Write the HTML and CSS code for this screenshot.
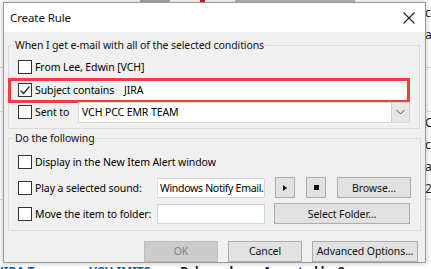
FILE: index.html
```html
<html>
<head>
  <title>Create Rule</title>
  <link rel="stylesheet" href="styles.css">
</head>
<body>

<div class="desktop">
  <!-- mail list behind the dialog -->
  <div class="mail-list">
    <div class="mail-row top"><span class="bit gray"></span><span class="bit red"></span><span class="bit gray wide"></span></div>
    <div class="mail-row"><span class="m-right">co</span></div>
    <div class="mail-row"><span class="m-right">ar</span></div>
    <div class="mail-row line"><span class="m-right">&nbsp;</span></div>
    <div class="mail-row"><span class="m-right">&nbsp;</span></div>
    <div class="mail-row line"><span class="m-right">&nbsp;</span></div>
    <div class="mail-row"><span class="m-right">Co</span></div>
    <div class="mail-row"><span class="m-right">co</span></div>
    <div class="mail-row"><span class="m-right">ar</span></div>
    <div class="mail-row line"><span class="m-right">2</span></div>
    <div class="mail-row"><span class="m-right">&nbsp;</span></div>
    <div class="mail-row bottom">
      <span class="blue">JIRA Team</span><span class="blue">VCH IMITS</span>
      <span class="dark">Released</span><span class="dark">Accepted by 2</span>
    </div>
  </div>

  <div class="dialog">
    <div class="titlebar">
      <span class="title">Create Rule</span>
      <svg class="close" width="12" height="12" viewBox="0 0 12 12">
        <path d="M0.5 0.5 L11.5 11.5 M11.5 0.5 L0.5 11.5" stroke="#222" stroke-width="1.1" fill="none"/>
      </svg>
    </div>

    <div class="dialog-body">
      <fieldset class="group group-when">
        <legend>When I get e-mail with all of the selected conditions</legend>

        <div class="row">
          <label class="check"><span class="box"></span>From Lee, Edwin [VCH]</label>
        </div>

        <div class="row highlighted">
          <label class="check w-subject"><span class="box checked">
            <svg width="12" height="12" viewBox="0 0 12 12"><path d="M1.5 6.5 L4.5 9.5 L10.5 2.5" stroke="#222" stroke-width="1.2" fill="none"/></svg>
          </span>Subject contains</label>
          <div class="field grow">JIRA</div>
          <div class="red-box"></div>
        </div>

        <div class="row">
          <label class="check w-sent"><span class="box"></span>Sent to</label>
          <div class="combo grow">
            <span class="combo-text">VCH PCC EMR TEAM</span>
            <span class="combo-btn">
              <svg width="9" height="6" viewBox="0 0 9 6"><path d="M0.5 1 L4.5 5 L8.5 1" stroke="#555" stroke-width="1" fill="none"/></svg>
            </span>
          </div>
        </div>
      </fieldset>

      <fieldset class="group group-do">
        <legend>Do the following</legend>

        <div class="row tall">
          <label class="check"><span class="box"></span>Display in the New Item Alert window</label>
        </div>

        <div class="row tall">
          <label class="check w-action"><span class="box"></span>Play a selected sound:</label>
          <div class="field sound">Windows Notify Email.</div>
          <button class="btn icon-btn play">
            <svg width="4" height="6" viewBox="0 0 4 6"><path d="M0 0 L4 3 L0 6 Z" fill="#111"/></svg>
          </button>
          <button class="btn icon-btn stop">
            <svg width="5" height="5" viewBox="0 0 5 5"><rect width="5" height="5" fill="#111"/></svg>
          </button>
          <button class="btn browse">Browse...</button>
        </div>

        <div class="row tall">
          <label class="check w-action"><span class="box"></span>Move the item to folder:</label>
          <div class="field folder"></div>
          <button class="btn select-folder">Select Folder...</button>
        </div>
      </fieldset>

      <div class="actions">
        <button class="btn action disabled">OK</button>
        <button class="btn action">Cancel</button>
        <button class="btn action wide">Advanced Options...</button>
      </div>
    </div>
  </div>
</div>

</body>
</html>
```

FILE: styles.css
```css
* {
  box-sizing: border-box;
}

body {
  margin: 0;
  background: #fff;
  font-family: 'Noto Sans', 'Open Sans', sans-serif;
  font-size: 10.5px;
  letter-spacing: -0.1px;
  color: #000;
  overflow: hidden;
}

.desktop {
  position: relative;
  width: 431px;
  height: 269px;
  overflow: hidden;
}

/* background mail list */
.mail-list {
  display: flex;
  flex-direction: column;
  height: 269px;
}

.mail-row {
  display: flex;
  justify-content: flex-end;
  height: 22px;
  line-height: 22px;
  font-size: 12px;
  color: #222;
}

.mail-row.top {
  height: 2px;
  justify-content: flex-start;
  align-items: flex-start;
  gap: 30px;
  padding-left: 140px;
}

.bit {
  width: 30px;
  height: 2px;
}

.bit.gray {
  background: #aaa;
}

.bit.red {
  width: 5px;
  background: #c62828;
}

.bit.wide {
  width: 120px;
  background: #bbb;
}

.mail-row.line {
  border-bottom: 1px solid #ddd;
}

.m-right {
  width: 6px;
  overflow: hidden;
  white-space: nowrap;
}

.mail-row.bottom {
  margin-top: auto;
  height: 6px;
  line-height: 18px;
  justify-content: flex-start;
  gap: 30px;
  white-space: nowrap;
  font-weight: bold;
}

.blue {
  color: #0a62b8;
}

.dark {
  color: #111;
}

/* the dialog */
.dialog {
  position: absolute;
  left: 3px;
  top: 2px;
  width: 423px;
  height: 261px;
  border: 1px solid #9a9a9a;
  background: #f0f0f0;
  box-shadow: 0 0 6px rgba(0, 0, 0, 0.25);
  display: flex;
  flex-direction: column;
}

.titlebar {
  height: 29px;
  background: #fff;
  display: flex;
  align-items: center;
  justify-content: space-between;
  padding: 0 10px 0 6px;
  flex-shrink: 0;
}

.title {
  font-size: 11.5px;
  color: #111;
}

.dialog-body {
  padding: 6px 5px 0 4px;
  display: flex;
  flex-direction: column;
}

.group {
  margin: 0;
  border: 1px solid #dcdcdc;
  padding: 0 9px 4px 9px;
}

.group legend {
  padding: 0 1px;
  margin-left: -4px;
  line-height: 15px;
  color: #111;
}

.group-when {
  padding-top: 3px;
}

.group-do {
  margin-top: 2px;
  padding-top: 3px;
  padding-bottom: 3px;
}

.row {
  position: relative;
  display: flex;
  align-items: center;
  height: 22.5px;
}

.row.tall {
  height: 26px;
}

.check {
  display: flex;
  align-items: center;
  gap: 3px;
  white-space: nowrap;
  flex-shrink: 0;
}

.w-subject { width: 102px; }
.w-sent { width: 60px; }
.w-action { width: 139px; }

.box {
  width: 14px;
  height: 14px;
  border: 1px solid #333;
  background: #fff;
  display: flex;
  align-items: center;
  justify-content: center;
}

.field {
  height: 20px;
  line-height: 18px;
  background: #fff;
  border: 1px solid #d9d9d9;
  padding: 0 3px;
  white-space: nowrap;
  overflow: hidden;
}

.grow {
  flex: 1;
}

.red-box {
  position: absolute;
  left: -10px;
  right: 0;
  top: -1px;
  bottom: -2px;
  border: 3px solid #ea4042;
  pointer-events: none;
}

.highlighted .field {
  margin-right: 4px;
  border-color: #fff;
}

.combo {
  height: 21px;
  display: flex;
  background: #fff;
  border: 1px solid #d9d9d9;
}

.combo-text {
  flex: 1;
  padding: 0 3px;
  line-height: 19px;
}

.combo-btn {
  width: 18px;
  background: #e6e6e6;
  border-left: 1px solid #cfcfcf;
  display: flex;
  align-items: center;
  justify-content: center;
}

.btn {
  font-family: inherit;
  font-size: 10.5px;
  letter-spacing: -0.1px;
  color: #111;
  background: #e1e1e1;
  border: 1px solid #adadad;
  height: 21px;
  padding: 0;
  display: flex;
  align-items: center;
  justify-content: center;
}

.sound {
  width: 108px;
  padding: 0 1px 0 2px;
  letter-spacing: -0.3px;
}

.icon-btn {
  width: 20px;
  margin-left: 10px;
}

.icon-btn.stop {
  margin-left: 11px;
}

.browse {
  width: 74px;
  margin-left: 11px;
}

.folder {
  width: 108px;
  border-color: #c8d8e8;
}

.select-folder {
  width: 136px;
  margin-left: 9px;
}

.actions {
  display: flex;
  justify-content: flex-end;
  gap: 10px;
  margin-top: 10px;
  padding-right: 2px;
}

.action {
  width: 74px;
}

.action.wide {
  width: 106px;
}

.action.disabled {
  background: #cccccc;
  border-color: #bfbfbf;
  color: #838383;
}
```
